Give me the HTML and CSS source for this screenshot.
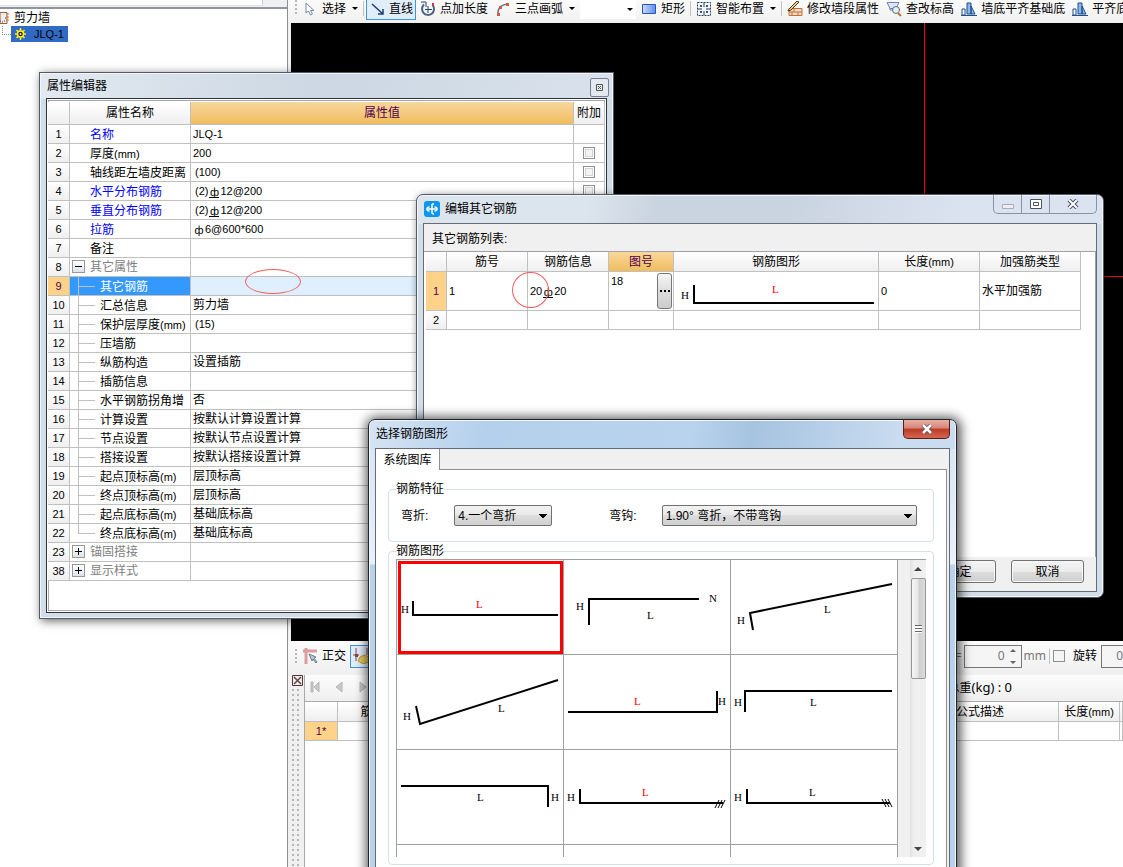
FILE: index.html
```html
<!DOCTYPE html>
<html lang="zh-CN">
<head>
<meta charset="utf-8">
<title>剪力墙</title>
<link rel="stylesheet" href="styles.css">
</head>
<body>
<div class="desktop">
  <aside class="side">
    <div class="side-top"><input class="search" type="text" aria-label="搜索"></div>
    <div class="tree">
      <div class="tree-root">
        <svg width="10" height="14" viewBox="0 0 10 14"><path d="M0 1.500h7v11H0z" fill="#eee" stroke="#a0603a"/><path d="M0 10h1m1 1h1m1-1h1m0-3h1" stroke="#444"/><path d="M6 3h3M6 6h3M6 9h3" stroke="#d07020"/></svg>
        <span>剪力墙</span>
      </div>
      <div class="tree-child">
        <span class="tree-item">
          <svg width="11" height="12" viewBox="0 0 11 12"><path d="M5.500 0v12M0 6h11M1.500 2l8 8M9.500 2l-8 8" stroke="#ffef20" stroke-width="1.500"/><circle cx="5.500" cy="6" r="3" fill="#222" stroke="#ffef20" stroke-width="1.500"/><circle cx="5.500" cy="6" r="1" fill="#ffef20"/></svg>
          <span class="n">JLQ-1</span>
        </span>
      </div>
    </div>
  </aside>

  <main class="main">
    <div class="toolbar">
      <i class="grip"></i>
      <button class="tool"><svg width="16" height="16" viewBox="0 0 16 16"><path d="M4 2v10l2.500-2 2 4 2-1-2-3.500H12z" fill="#fff" stroke="#7788a5"/></svg>选择<i class="drop"></i></button>
      <i class="sep"></i>
      <button class="tool on"><svg width="16" height="16" viewBox="0 0 16 16"><path d="M3 3l11 10M9 13h5V8" fill="none" stroke="#1c3f73" stroke-width="1.500"/></svg>直线</button>
      <button class="tool"><svg width="16" height="16" viewBox="0 0 16 16"><path d="M4 3.500a6 6 0 1 0 9 1" fill="none" stroke="#4a6080" stroke-width="2"/><path d="M1 1h5v5M8 5v7M5 8.500h7" fill="none" stroke="#27446c"/><path d="M13 2v3" stroke="#c33" stroke-width="2"/></svg>点加长度</button>
      <button class="tool"><svg width="16" height="16" viewBox="0 0 16 16"><path d="M3 14Q2 4 13 3" fill="none" stroke="#5f7191" stroke-width="1.500"/><path d="M2 12h3v3H2zM4 5h3v3H4zM11 2h3v3h-3z" fill="#d9583a"/></svg>三点画弧<i class="drop"></i></button>
      <span class="combo"><i class="drop"></i></span>
      <button class="tool"><svg width="16" height="16" viewBox="0 0 16 16"><defs><linearGradient id="bl"><stop stop-color="#c9dcff"/><stop offset="1" stop-color="#5c8df0"/></linearGradient></defs><path d="M1.500 3.500h13v9h-13z" fill="url(#bl)" stroke="#2d55b5"/></svg>矩形</button>
      <i class="sep"></i>
      <button class="tool"><svg width="16" height="16" viewBox="0 0 16 16"><path d="M1.500 1.500h13v13h-13z" fill="none" stroke="#1e3c64" stroke-dasharray="2 1"/><path d="M8 2v4M8 10v4M2 8h4M10 8h4" stroke="#1e3c64"/><path d="M4 4h2v2H4zm6 0h2v2h-2zm-6 6h2v2H4zm6 0h2v2h-2z" fill="#38587e"/></svg>智能布置<i class="drop"></i></button>
      <i class="sep"></i>
      <button class="tool"><svg width="16" height="16" viewBox="0 0 16 16"><path d="M2 7.500h13v7H2z" fill="#f5d8c0" stroke="#c0703c"/><path d="M2 11h13M7 7v4m4 0v4M5 11v4" stroke="#c0703c"/><path d="M1 10l3-1 8-8-2-1-8 8z" fill="#eecf70" stroke="#443b2c"/></svg>修改墙段属性</button>
      <button class="tool"><svg width="16" height="16" viewBox="0 0 16 16"><path d="M1 1.500h12l-3 6H4z" fill="#dce4f5" stroke="#7083b5"/><path d="M4 7v2h3" fill="none" stroke="#7083b5"/><circle cx="10" cy="9" r="3.500" fill="#dff0fa" stroke="#667"/><path d="M12 12l3 3" stroke="#b97834" stroke-width="2"/></svg>查改标高</button>
      <button class="tool"><svg width="16" height="16" viewBox="0 0 16 16"><path d="M6 2h4v11H6zM10 5l4 8h-4z" fill="#8ab8e8" stroke="#1f4f8a"/><path d="M1 14V8h3v6zM0 14.500h16" fill="#fff" stroke="#1f4f8a"/></svg>墙底平齐基础底</button>
      <button class="tool"><svg width="16" height="16" viewBox="0 0 16 16"><path d="M6 2h4v11H6zM10 5l4 8h-4z" fill="#8ab8e8" stroke="#1f4f8a"/><path d="M1 14V8h3v6zM0 14.500h16" fill="#fff" stroke="#1f4f8a"/></svg>平齐底</button>
    </div>
    <div class="canvas"></div>
    <div class="snapbar">
      <i class="grip"></i>
      <button class="tool"><svg width="16" height="16" viewBox="0 0 16 16"><path d="M1 3h14M4 0v16" stroke="#dd9b9b" stroke-width="3"/><path d="M7 6l7 3-2 1 3 4-1 1-3-4-1 2z" fill="#b9c5d2" stroke="#6d7f92"/></svg>正交</button>
      <button class="tool on" aria-label="捕捉"><svg width="16" height="16" viewBox="0 0 16 16"><path d="M3 0v13M14 0v7M0 7h6" stroke="#934040"/><path d="M2 6h3v3H2z" fill="#934040"/><path d="M5 13l2-4 4-2 5 2v5l-6 2z" fill="#e8c860" stroke="#b89a40"/></svg></button>
      <div class="snap-right">
        <label for="off">=</label>
        <span class="spin"><input id="off" type="text" value="0"><i class="spin-arrows"></i></span>
        <span class="mm">mm</span>
        <i class="sep"></i>
        <label class="rot"><input class="check" type="checkbox">旋转</label>
        <span class="spin last"><input type="text" value="0" aria-label="旋转角度"></span>
      </div>
    </div>
    <div class="record">
      <div class="handle">
        <svg width="11" height="11" viewBox="0 0 11 11"><path d="M.500.500h10v10H.500z" fill="#eee" stroke="#533"/><path d="M2 2l7 7M9 2L2 9" stroke="#644" stroke-width="1.500"/></svg>
        <div class="dots"></div>
      </div>
      <div class="record-body">
        <div class="nav">
          <svg width="60" height="12" viewBox="0 0 60 12"><path d="M1 1h2v10H1zM9 1v10L4 6zM32 1v10L26 6zM50 1v10l6-5z" fill="#c9c9c9" stroke="#b5b5b5"/></svg>
          <span class="weight">总重<span class="ui">(kg) : 0</span></span>
        </div>
        <table class="grid record-table">
          <colgroup><col class="c33"><col class="c70"><col><col class="c157"><col class="c61"><col class="c3"></colgroup>
          <tr><th></th><th>筋号</th><th></th><th>公式描述</th><th>长度<span class="n">(mm)</span></th><th></th></tr>
          <tr><th class="cur"><span class="n">1*</span></th><td></td><td></td><td></td><td></td><td></td></tr>
        </table>
      </div>
    </div>
  </main>

  <section class="win win-props">
    <header class="title"><h2>属性编辑器</h2><button class="mini-close" aria-label="关闭"><svg width="7" height="7" viewBox="0 0 7 7"><path d="M.500.500h6v6h-6zM2 2l3 3M5 2L2 5" fill="none" stroke="#555"/></svg></button></header>
    <div class="props-frame">
      <table class="grid props">
        <colgroup><col class="c22"><col class="c121"><col><col class="c31"></colgroup>
        <tr class="head"><th></th><th>属性名称</th><th class="cur">属性值</th><th>附加</th></tr>
        <tr><th class="n">1</th><td class="name key">名称</td><td><span class="n">JLQ-1</span></td><td></td></tr>
        <tr><th class="n">2</th><td class="name">厚度<span class="n">(mm)</span></td><td><span class="n">200</span></td><td class="ck"><input class="check" type="checkbox" aria-label="附加 厚度"></td></tr>
        <tr><th class="n">3</th><td class="name">轴线距左墙皮距离</td><td><span class="n in">(100)</span></td><td class="ck"><input class="check" type="checkbox" aria-label="附加 轴线距"></td></tr>
        <tr><th class="n">4</th><td class="name key">水平分布钢筋</td><td><span class="n in">(2)<b class="bar three">ф</b>12@200</span></td><td class="ck"><input class="check" type="checkbox" aria-label="附加 水平分布钢筋"></td></tr>
        <tr><th class="n">5</th><td class="name key">垂直分布钢筋</td><td><span class="n in">(2)<b class="bar three">ф</b>12@200</span></td><td></td></tr>
        <tr><th class="n">6</th><td class="name key">拉筋</td><td><span class="n"><b class="bar">ф</b>6@600*600</span></td><td></td></tr>
        <tr><th class="n">7</th><td class="name">备注</td><td></td><td></td></tr>
        <tr><th class="n">8</th><td class="name group"><button class="toggle" aria-label="折叠"><svg width="9" height="9" viewBox="0 0 9 9"><path d="M1 4.500h7" stroke="#000"/></svg></button>其它属性</td><td></td><td></td></tr>
        <tr class="sel"><th class="n cur">9</th><td class="name sub">其它钢筋</td><td></td><td></td></tr>
        <tr><th class="n">10</th><td class="name sub">汇总信息</td><td>剪力墙</td><td></td></tr>
        <tr><th class="n">11</th><td class="name sub">保护层厚度<span class="n">(mm)</span></td><td><span class="n in">(15)</span></td><td></td></tr>
        <tr><th class="n">12</th><td class="name sub">压墙筋</td><td></td><td></td></tr>
        <tr><th class="n">13</th><td class="name sub">纵筋构造</td><td>设置插筋</td><td></td></tr>
        <tr><th class="n">14</th><td class="name sub">插筋信息</td><td></td><td></td></tr>
        <tr><th class="n">15</th><td class="name sub">水平钢筋拐角增</td><td>否</td><td></td></tr>
        <tr><th class="n">16</th><td class="name sub">计算设置</td><td>按默认计算设置计算</td><td></td></tr>
        <tr><th class="n">17</th><td class="name sub">节点设置</td><td>按默认节点设置计算</td><td></td></tr>
        <tr><th class="n">18</th><td class="name sub">搭接设置</td><td>按默认搭接设置计算</td><td></td></tr>
        <tr><th class="n">19</th><td class="name sub">起点顶标高<span class="n">(m)</span></td><td>层顶标高</td><td></td></tr>
        <tr><th class="n">20</th><td class="name sub">终点顶标高<span class="n">(m)</span></td><td>层顶标高</td><td></td></tr>
        <tr><th class="n">21</th><td class="name sub">起点底标高<span class="n">(m)</span></td><td>基础底标高</td><td></td></tr>
        <tr><th class="n">22</th><td class="name sub end">终点底标高<span class="n">(m)</span></td><td>基础底标高</td><td></td></tr>
        <tr><th class="n">23</th><td class="name group"><button class="toggle" aria-label="展开"><svg width="9" height="9" viewBox="0 0 9 9"><path d="M1 4.500h7M4.500 1v7" stroke="#000"/></svg></button>锚固搭接</td><td></td><td></td></tr>
        <tr><th class="n">38</th><td class="name group"><button class="toggle" aria-label="展开"><svg width="9" height="9" viewBox="0 0 9 9"><path d="M1 4.500h7M4.500 1v7" stroke="#000"/></svg></button>显示样式</td><td></td><td></td></tr>
      </table>
    </div>
    <i class="mark mark-value"></i>
  </section>

  <section class="win round win-edit">
    <header class="title">
      <svg width="16" height="16" viewBox="0 0 16 16"><rect width="16" height="16" rx="3" fill="#0b95f5"/><path d="M8 3v8.500Q8 13 10 13M3 8h10M5.500 6Q3 6 3 8t2.500 2M10.500 6Q13 6 13 8t-2.500 2M8 3h2" fill="none" stroke="#fff" stroke-width="1.500"/></svg>
      <h2>编辑其它钢筋</h2>
      <div class="caption">
        <button class="cap" aria-label="最小化"><svg width="12" height="10" viewBox="0 0 12 10"><path d="M.500 5.500h11v4H.500z" fill="#eee" stroke="#a5adb8"/></svg></button>
        <button class="cap" aria-label="最大化"><svg width="12" height="10" viewBox="0 0 12 10"><path d="M.500.500h11v9H.500zM3.500 3.500h5v3h-5z" fill="#fff" stroke="#4a5260"/></svg></button>
        <button class="cap wide" aria-label="关闭"><svg width="12" height="10" viewBox="0 0 12 10"><path d="M2 1l8 8M10 1L2 9" stroke="#4a5260" stroke-width="4"/><path d="M2 1l8 8M10 1L2 9" stroke="#fff" stroke-width="2"/></svg></button>
      </div>
    </header>
    <div class="client edit-client">
      <p class="list-label">其它钢筋列表:</p>
      <div class="list">
        <table class="grid bars">
          <colgroup><col class="c21"><col class="c81"><col class="c81"><col class="c65"><col><col class="c101"><col class="c101"></colgroup>
          <tr class="head"><th></th><th>筋号</th><th>钢筋信息</th><th class="cur">图号</th><th>钢筋图形</th><th>长度<span class="n">(mm)</span></th><th>加强筋类型</th></tr>
          <tr class="tall"><th class="n cur">1</th><td><span class="n">1</span></td><td><span class="n">20<b class="bar two">ф</b>20</span></td>
            <td class="no"><div class="pick"><span class="n">18</span><button class="more" aria-label="选择图号"><svg width="12" height="3" viewBox="0 0 12 3"><path d="M1 0h2v2H1zM5 0h2v2H5zM9 0h2v2H9z"/></svg></button></div></td>
            <td class="shape"><svg width="205" height="37" viewBox="0 0 205 37"><path d="M20 12v18H200"/><text x="7" y="26">H</text><text x="98" y="20" class="r">L</text></svg></td>
            <td><span class="n">0</span></td><td>水平加强筋</td></tr>
          <tr><th class="n">2</th><td></td><td></td><td></td><td></td><td></td><td></td></tr>
        </table>
      </div>
      <div class="actions"><button class="btn">确定</button><button class="btn">取消</button></div>
    </div>
    <i class="mark mark-info"></i>
  </section>

  <section class="win round win-pick">
    <header class="title"><h2>选择钢筋图形</h2><button class="red-close" aria-label="关闭"><svg width="12" height="10" viewBox="0 0 12 10"><path d="M2 1l8 8M10 1L2 9" stroke="#51485a" stroke-width="4"/><path d="M2 1l8 8M10 1L2 9" stroke="#fff" stroke-width="2.500"/></svg></button></header>
    <div class="client pick-client">
      <div class="tabs"><button class="tab">系统图库</button></div>
      <div class="page">
        <fieldset class="feature">
          <legend>钢筋特征</legend>
          <div class="fields">
            <label for="bend">弯折:</label>
            <select id="bend" class="select s1"><option>4.一个弯折</option></select>
            <label for="hook">弯钩:</label>
            <select id="hook" class="select s2"><option>1.90° 弯折，不带弯钩</option></select>
          </div>
        </fieldset>
        <fieldset class="gallery">
          <legend>钢筋图形</legend>
          <div class="gallery-view">
            <div class="cells">
              <div class="cell chosen shape"><svg viewBox="0 0 166 94"><path d="M16 41v14h145"/><text x="4" y="53">H</text><text x="79" y="48" class="r">L</text></svg></div>
              <div class="cell shape"><svg viewBox="0 0 166 94"><path d="M25 65V39h110"/><text x="12" y="50">H</text><text x="83" y="59">L</text><text x="145" y="42">N</text></svg></div>
              <div class="cell shape"><svg viewBox="0 0 166 94"><path d="M22 70l-3-17 142-29"/><text x="6" y="64">H</text><text x="93" y="53">L</text></svg></div>
              <div class="cell shape"><svg viewBox="0 0 166 94"><path d="M19 51l4 18L161 25"/><text x="6" y="65">H</text><text x="101" y="57">L</text></svg></div>
              <div class="cell shape"><svg viewBox="0 0 166 94"><path d="M4 57h149V36"/><text x="154" y="50">H</text><text x="70" y="50" class="r">L</text></svg></div>
              <div class="cell shape"><svg viewBox="0 0 166 94"><path d="M161 36H14v21"/><text x="3" y="51">H</text><text x="79" y="51">L</text></svg></div>
              <div class="cell shape"><svg viewBox="0 0 166 94"><path d="M4 36h147v21"/><text x="154" y="51">H</text><text x="80" y="51">L</text></svg></div>
              <div class="cell shape"><svg viewBox="0 0 166 94"><path d="M16 39v14h143"/><path class="thin" d="M151 58l4-8M154 58l4-8M157 58l4-8"/><text x="3" y="51">H</text><text x="78" y="46" class="r">L</text></svg></div>
              <div class="cell shape"><svg viewBox="0 0 166 94"><path d="M16 39v14h143"/><path class="thin" d="M151 49l4 8M154 49l4 8M157 49l4 8"/><text x="3" y="51">H</text><text x="78" y="46">L</text></svg></div>
              <div class="cell"></div><div class="cell"></div><div class="cell"></div>
            </div>
            <div class="scroll">
              <i class="up"></i>
              <i class="thumb"></i>
              <i class="down"></i>
            </div>
          </div>
        </fieldset>
      </div>
    </div>
  </section>
</div>
</body>
</html>
```
FILE: styles.css
```css
* { box-sizing: border-box; }
body {
  margin: 0;
  font: 12px/16px "Liberation Sans", "Noto Sans CJK SC", sans-serif;
  color: #000;
  background: #fff;
}
button, input, select { font: inherit; color: inherit; margin: 0; padding: 0; }
button { border: 0; background: none; }
h2, p { margin: 0; font-size: 12px; font-weight: 400; }
svg { display: block; flex: none; }
i { font-style: normal; }
.n { font-size: 11px; }
.ui { font-family: "Noto Sans", sans-serif; font-size: 13px; }

.desktop { position: relative; display: flex; height: 100vh; overflow: hidden; }

/* left tree */
.side { width: 288px; flex: none; display: flex; flex-direction: column; border-right: 1px solid #8c8e96; }
.side-top { height: 9px; background: #eef0f2; border-bottom: 2px solid #92959c; }
.search { display: block; width: 263px; height: 6px; border: 0; border-right: 1px solid #c5d0dc; border-bottom: 1px solid #dde3ea; background: #fff; }
.tree-root { display: flex; align-items: center; gap: 4px; padding-top: 1px; }
.tree-child { padding-left: 11px; background: repeating-linear-gradient(90deg, #888 0 1px, transparent 1px 2px) 2px 8px / 9px 1px no-repeat, repeating-linear-gradient(#888 0 1px, transparent 1px 2px) 2px 0 / 1px 8px no-repeat; }
.tree-item { display: inline-flex; align-items: center; gap: 8px; height: 16px; padding: 0 4px; background: #316ac5; }

/* main area */
.main { flex: 1; min-width: 0; display: flex; flex-direction: column; background: #f0f0f0; }
.toolbar { display: flex; align-items: flex-start; gap: 1px; height: 23px; padding-left: 7px; overflow: hidden; background: linear-gradient(#fbfbfb, #f0f0f0); }
.tool { display: flex; align-items: center; gap: 4px; height: 23px; margin-top: -3px; padding: 0 2px; border: 1px solid transparent; white-space: nowrap; flex: none; }
.tool.on { border-color: #3c94e4; background: #e0edfa; }
.drop { width: 0; height: 0; margin-left: 2px; border: 3px solid transparent; border-top-color: #000; border-bottom: 0; }
.grip { width: 2px; height: 15px; margin-right: 1px; flex: none; background: repeating-linear-gradient(#b8b8b8 0 2px, transparent 2px 4px); }
.sep { width: 1px; height: 15px; margin: 1px; flex: none; background: #c0c0c0; }
.combo { display: flex; align-items: center; justify-content: flex-end; width: 56px; height: 19px; margin: 0 1px; padding: 0 3px; background: #fff; flex: none; }
.canvas {
  flex: 1; min-height: 0; margin-left: 3px; background-color: #000;
  background-image: linear-gradient(#f00, #f00), linear-gradient(#f00, #f00);
  background-size: 1px 100%, 100% 1px;
  background-position: 633px 0, 0 253px;
  background-repeat: no-repeat;
}
.snapbar { display: flex; align-items: center; gap: 1px; height: 34px; padding: 0 0 4px 7px; background: linear-gradient(#fcfcfc, #efefef); overflow: hidden; }
.snapbar .tool { margin-top: 0; }
.snap-right { display: flex; align-items: center; gap: 2px; margin-left: auto; color: #777; font-family: "Noto Sans", "Noto Sans CJK SC", sans-serif; }
.spin { display: flex; align-items: center; width: 58px; height: 23px; border: 1px solid #767676; background: #f5f5f5; }
.spin input { width: 100%; min-width: 0; border: 0; background: none; text-align: right; }
.spin.last { width: 22px; margin-left: 2px; border-right: 0; }
.spin-arrows { display: flex; flex-direction: column; justify-content: space-between; align-items: center; flex: none; width: 16px; height: 15px; }
.spin-arrows::before, .spin-arrows::after { content: ""; border: 3px solid transparent; }
.spin-arrows::before { border-bottom-color: #666; border-top: 0; }
.spin-arrows::after { border-top-color: #666; border-bottom: 0; }
.rot { display: flex; align-items: center; gap: 8px; color: #000; }
.check { appearance: none; width: 12px; height: 12px; border: 1px solid #8e8f8f; background: #f4f4f4; }

.record { display: flex; height: 192px; }
.handle { width: 16px; padding-left: 4px; flex: none; }
.dots { width: 8px; height: 180px; margin-top: 3px; background: linear-gradient(#b8b8b8, #b8b8b8) 0 0 / 2px 2px; background: conic-gradient(from 270deg at 2px 2px, #b8b8b8 90deg, transparent 0) 0 0 / 5px 5px; }
.record-body { flex: 1; min-width: 0; background: #fff; border-left: 1px solid #aaa; }
.nav { display: flex; align-items: center; justify-content: space-between; height: 27px; padding: 0 111px 2px 5px; background: linear-gradient(#fcfcfc, #efefef); border-bottom: 1px solid #aaa; }

/* tables */
.grid { table-layout: fixed; width: 100%; border-collapse: separate; border-spacing: 0; }
.grid th, .grid td { height: 19px; padding: 0 2px; border-right: 1px solid #c0c0c0; border-bottom: 1px solid #c0c0c0; font-weight: 400; text-align: left; white-space: nowrap; overflow: hidden; }
.grid th { padding: 0; text-align: center; background: linear-gradient(#fff, #efefef); }
.grid th.cur { color: #500050; background: #ffd28a; }
.grid .head th.cur { background: linear-gradient(#f8d79c, #f0bd5e); }
.c3 { width: 3px; } .c21 { width: 21px; } .c22 { width: 22px; } .c31 { width: 31px; } .c33 { width: 33px; }
.c61 { width: 61px; } .c65 { width: 65px; } .c70 { width: 70px; } .c81 { width: 81px; } .c101 { width: 101px; }
.c121 { width: 121px; } .c157 { width: 157px; }
.record-table tr:first-child th { height: 20px; }

/* windows */
.win { position: absolute; display: flex; flex-direction: column; padding: 0 6px 5px; border: 1px solid #555b65; background: #d3dde8; box-shadow: inset 0 0 0 1px #f2f6fa, 2px 2px 9px rgba(0, 0, 0, .6); }
.win.round { border-radius: 7px; }
.title { display: flex; align-items: center; flex: none; }
.title h2 { flex: 1; padding-left: 1px; }

.win-props { left: 39px; top: 72px; width: 575px; height: 547px; background: linear-gradient(100deg, #e2e9f1, #ccd7e3 50%, #d9e2ec) 0 0 / 100% 26px no-repeat, #d3dde8; }
.win-props .title { height: 25px; }
.mini-close { display: flex; align-items: center; justify-content: center; width: 19px; height: 19px; margin: 3px -2px 0 0; border: 1px solid #77808e; border-radius: 2px; background: #e4e9f0; }
.props-frame { flex: 1; padding: 3px 1px 0; border: 1px solid #30343a; background: #fff; box-shadow: inset 0 0 0 1px #fff, inset 0 0 0 2px #aaa6b0; }
.props .head th { height: 23px; }
.grid .name { padding: 1px 0 0 20px; }
.grid .key { color: #00f; }
.in { margin-left: 2px; }
.bar { display: inline-block; width: 12px; height: 11px; line-height: 10px; font-weight: 400; text-align: center; vertical-align: middle; }
.two, .three { width: 10px; margin: 0 1px; border-bottom: 1px solid #000; }
.grid .group { padding: 0 0 0 2px; color: #808080; }
.toggle { display: inline-flex; align-items: center; justify-content: center; width: 13px; height: 13px; margin: -2px 5px 0 0; border: 1px solid #999; background: linear-gradient(#fff, #dde3ea); vertical-align: middle; }
.grid .sub { padding-left: 30px; background: linear-gradient(#c0c0c0, #c0c0c0) 8px 0 / 1px 100% no-repeat, linear-gradient(#c0c0c0, #c0c0c0) 8px 9px / 17px 1px no-repeat; }
.grid .sub.end { background-size: 1px 9px, 17px 1px; }
.sel td { background: #dfeffe; }
.grid .sel .sub { background-color: #3399ff; color: #fff; }
.grid .ck { padding: 0; text-align: center; line-height: 10px; }
.ck .check { vertical-align: middle; box-shadow: inset 0 0 0 1px #fff, inset 0 0 0 2px #d0d4d8; }

.mark { position: absolute; border: 1px solid #f35b5b; border-radius: 50%; }
.mark-value { left: 205px; top: 196px; width: 56px; height: 25px; }
.mark-info { left: 95px; top: 77px; width: 37px; height: 36px; }

.win-edit { left: 416px; top: 194px; width: 688px; height: 404px; background: linear-gradient(100deg, #dce4ed, #dce4ed 25%, #cad4e0 35%, #cad4e0 55%, #dce3f0 80%) 0 0 / 100% 29px no-repeat, #d3dde8; }
.win-edit .title, .win-pick .title { height: 28px; }
.win-edit .title { gap: 4px; padding-left: 1px; }
.caption { display: flex; align-self: flex-start; height: 19px; border: 1px solid #8a93a0; border-top: 0; border-radius: 0 0 5px 5px; }
.cap { display: flex; align-items: center; justify-content: center; width: 28px; border-right: 1px solid #8a93a0; }
.cap.wide { width: 46px; border-right: 0; }
.client { flex: 1; min-height: 0; border: 1px solid #636c78; background: #f0f0f0; }
.edit-client { display: flex; flex-direction: column; }
.list-label { padding: 7px 0 4px 8px; }
.list { flex: 1; padding-left: 2px; background: #fff; border-top: 1px solid #a0a0a8; border-right: 1px solid #a0a0a8; }
.grid.bars { width: calc(100% - 14px); }
.bars .head th { height: 20px; }
.grid .tall th, .grid .tall td { height: 39px; }
.grid .no, .grid td.shape { padding: 0; }
.pick { display: flex; justify-content: space-between; height: 38px; padding: 1px 1px 1px 2px; }
.more { display: flex; align-items: center; justify-content: center; width: 15px; border: 1px solid #777; border-radius: 3px; background: linear-gradient(#f5f5f5, #ddd 50%, #ccc); }
.actions { display: flex; justify-content: flex-end; gap: 15px; padding: 3px 12px 8px; }
.btn { width: 73px; height: 23px; border: 1px solid #707070; border-radius: 3px; background: linear-gradient(#f3f3f3, #ebebeb 50%, #ddd 50%, #cfcfcf); box-shadow: inset 0 0 0 1px #fafafa; }

.shape path { fill: none; stroke: #000; stroke-width: 2; }
.shape .thin { stroke-width: 1; }
.shape text { font: 11px "Liberation Serif", serif; }
.shape .r { fill: #f00; }

.win-pick { left: 368px; top: 419px; width: 589px; bottom: -20px; border-color: #20252c; background: linear-gradient(100deg, #d5e4f4, #b5d0ec 20%, #b9d3ee 55%, #a6c3e0 65%, #c9dcf0 90%) 0 0 / 100% 29px no-repeat, linear-gradient(#d5e3f3, #e9f1fa 144px, #b9d1ea 145px); box-shadow: inset 0 0 0 1px #f2f6fa, 1px 1px 11px 3px rgba(0, 0, 0, .65); }
.red-close { display: flex; align-items: center; justify-content: center; align-self: flex-start; width: 47px; height: 19px; border: 1px solid #5b1c18; border-top: 0; border-radius: 0 0 5px 5px; background: linear-gradient(#eab0a5, #d78476 45%, #bd3a28 50%, #d2674f); }
.pick-client { padding-right: 2px; }
.tabs { position: relative; height: 20px; }
.tab { position: relative; z-index: 1; width: 64px; height: 21px; padding-top: 1px; background: #fff; border-right: 1px solid #8c8e94; }
.page { height: 500px; padding: 11px 12px 0; background: #fff; border: 1px solid #8c8e94; border-left: 0; }
fieldset { min-width: 0; margin: 0; padding: 0 7px; border: 1px solid #d5dfe5; border-radius: 4px; }
legend { margin: 0; padding: 0; line-height: 16px; }
.feature { height: 61px; }
.fields { display: flex; align-items: center; padding: 8px 5px 0; }
.select { appearance: none; height: 21px; padding: 0 3px; border: 1px solid #707070; border-radius: 2px; font-size: 12px; background: conic-gradient(from -45deg at 50% 100%, #000 90deg, transparent 0) right 4px center / 8px 4px no-repeat, linear-gradient(#f2f2f2, #e8e8e8 50%, #ddd 50%, #cfcfcf); }
.s1 { width: 98px; margin: 0 57px 0 26px; }
.s2 { width: 255px; margin-left: 25px; }
.gallery { margin-top: 1px; padding-bottom: 7px; }
.gallery-view { display: flex; height: 298px; overflow: hidden; border: 1px solid #a0a0a0; border-width: 1px 0 0 1px; background: #f0f0f0; }
.cells { flex: 1; display: grid; grid-template-columns: repeat(3, 1fr); grid-auto-rows: 95px; }
.cell { background: #fff; border-right: 1px solid #a0a0a0; border-bottom: 1px solid #a0a0a0; }
.cell svg { width: 100%; height: 94px; }
.chosen { outline: 3px solid #f00; outline-offset: -4px; }
.scroll { display: flex; flex-direction: column; align-items: center; width: 16px; margin-left: 12px; padding-top: 7px; background: linear-gradient(90deg, #e3e3e3, #f0f0f0 30%, #f0f0f0); }
.up, .down { border: 4px solid transparent; }
.up { border-bottom-color: #444; border-top: 0; }
.down { border-top-color: #444; border-bottom: 0; margin: auto 0 6px; }
.thumb { width: 15px; height: 101px; margin-top: 7px; border: 1px solid #979797; border-radius: 2px; background: repeating-linear-gradient(#666 0 1px, #fff 1px 3px) center / 7px 8px no-repeat, linear-gradient(90deg, #f5f5f5, #e6e6e6 45%, #cfcfcf 55%, #dcdcdc); }
```
